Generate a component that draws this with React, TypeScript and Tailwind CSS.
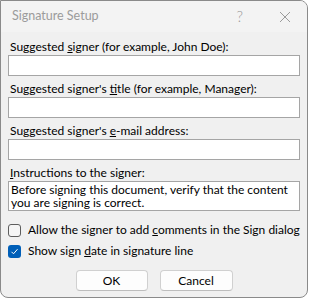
import React from 'react';

const font = { fontFamily: 'Lato, "Noto Sans", sans-serif' };

function Field({ children }: { children: React.ReactNode }) {
    return (
        <>
            <div className="h-[16px] leading-[16px] pl-[2px] text-[12px] text-black mt-[5px]">{children}</div>
            <div className="h-[21px] bg-white border border-[#a5a5a5]"></div>
        </>
    );
}

export default function App() {
    return (
        <div className="w-[310px] h-[300px] bg-white" style={font}>
            <div className="w-[308px] h-[298px] bg-[#f0f0f0] border border-[#8a8a8a] rounded-[8px] rounded-tl-none flex flex-col overflow-hidden">
                {/* Title bar */}
                <div className="h-[31px] flex items-center bg-[#f3f3f3] text-[#9b9b9b] shrink-0">
                    <span className="pl-[11px] text-[12.5px]">Signature Setup</span>
                    <span className="ml-auto mr-[36px] text-[15px] font-light">?</span>
                    <svg width="12" height="12" viewBox="0 0 12 12" className="mr-[16px]">
                        <path d="M1 1 L11 11 M11 1 L1 11" stroke="#9b9b9b" strokeWidth="1" />
                    </svg>
                </div>

                {/* Body */}
                <div className="px-[7px] flex flex-col">
                    <div className="h-[2px]"></div>
                    <Field>Suggested <u>s</u>igner (for example, John Doe):</Field>
                    <Field>Suggested signer's <u>t</u>itle (for example, Manager):</Field>
                    <Field>Suggested signer's <u>e</u>-mail address:</Field>

                    <div className="h-[16px] leading-[16px] pl-[2px] text-[12px] text-black mt-[5px]"><u>I</u>nstructions to the signer:</div>
                    <div className="h-[30px] bg-white border border-[#a5a5a5] px-[2px] pt-[2px] text-[12px] leading-[12.5px] text-black">
                        Before signing this document, verify that the content you are signing is correct.
                    </div>

                    <label className="mt-[11px] h-[16px] flex items-center gap-[7px] text-[12px] text-black">
                        <span className="w-[13px] h-[13px] rounded-[3px] border border-[#5d5d5d] bg-[#f5f5f5] shrink-0"></span>
                        <span>Allow the signer to add <u>c</u>omments in the Sign dialog</span>
                    </label>
                    <label className="mt-[5px] h-[16px] flex items-center gap-[7px] text-[12px] text-black">
                        <span className="w-[13px] h-[13px] rounded-[3px] bg-[#005fb8] shrink-0 flex items-center justify-center">
                            <svg width="9" height="9" viewBox="0 0 9 9">
                                <path d="M1.5 4.8 L3.5 6.8 L7.5 2.2" stroke="white" strokeWidth="1" fill="none" />
                            </svg>
                        </span>
                        <span>Show sign <u>d</u>ate in signature line</span>
                    </label>

                    <div className="mt-[11px] flex justify-center gap-[12px]">
                        <button className="w-[72px] h-[21px] bg-[#fdfdfd] border border-[#d0d0d0] border-b-[#bdbdbd] rounded-[4px] text-[12px] text-black">OK</button>
                        <button className="w-[73px] h-[21px] bg-[#fdfdfd] border border-[#d0d0d0] border-b-[#bdbdbd] rounded-[4px] text-[12px] text-black">Cancel</button>
                    </div>
                </div>
            </div>
        </div>
    );
}
